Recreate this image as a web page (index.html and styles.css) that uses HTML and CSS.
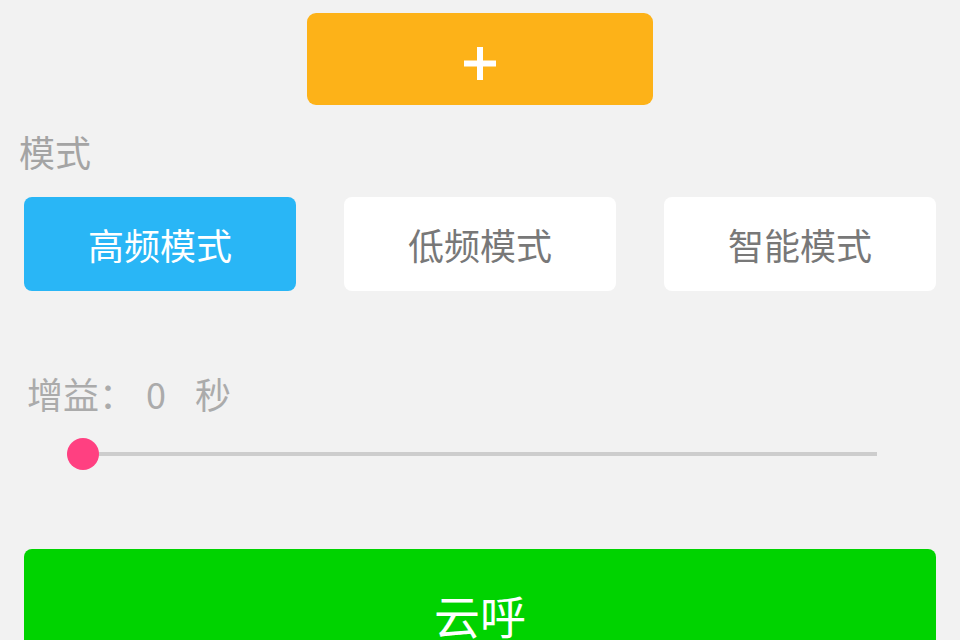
FILE: index.html
```html
<!DOCTYPE html>
<html lang="zh-CN">
<head>
    <meta charset="UTF-8">
    <meta name="viewport" content="width=device-width, initial-scale=1.0">
    <title>云呼</title>
    <link rel="stylesheet" href="styles.css">
</head>
<body>
    <div class="page">
        <button class="add-btn" aria-label="添加">
            <svg width="32" height="33" viewBox="0 0 32 33">
                <rect x="13" y="0" width="6" height="33" fill="#fff"/>
                <rect x="0" y="13.5" width="32" height="6" fill="#fff"/>
            </svg>
        </button>

        <div class="section-label">模式</div>
        <div class="modes">
            <button class="mode active">高频模式</button>
            <button class="mode">低频模式</button>
            <button class="mode">智能模式</button>
        </div>

        <div class="gain-label">增益：<span class="gain-value">0</span><span class="gain-unit">秒</span></div>
        <input type="range" class="gain-slider" min="0" max="60" value="0">

        <button class="call-btn">云呼</button>
    </div>
</body>
</html>
```

FILE: styles.css
```css
body {
    margin: 0;
    background: #f2f2f2;
    font-family: "Noto Sans CJK SC", "Noto Sans", sans-serif;
    overflow: hidden;
}
.page {
    height: 640px;
}
button {
    border: none;
    font-family: inherit;
    cursor: pointer;
}
.add-btn {
    display: flex;
    align-items: center;
    justify-content: center;
    width: 346px;
    height: 92px;
    margin: 13px auto 0;
    padding: 8px 0 0;
    background: #fdb218;
    border-radius: 9px;
}
.section-label {
    margin: 28px 0 0 19px;
    font-size: 36px;
    line-height: 36px;
    color: #a4a4a4;
}
.modes {
    display: flex;
    gap: 48px;
    margin: 28px 24px 0;
}
.mode {
    flex: 1;
    height: 94px;
    background: #fff;
    border-radius: 8px;
    font-size: 36px;
    color: #787878;
}
.mode.active {
    background: #29b6f6;
    color: #fff;
}
.gain-label {
    margin: 85px 0 0 27px;
    font-size: 36px;
    line-height: 34px;
    color: #ababab;
}
.gain-value {
    margin-left: 11px;
}
.gain-unit {
    margin-left: 29px;
}
.gain-slider {
    -webkit-appearance: none;
    appearance: none;
    display: block;
    width: 810px;
    height: 32px;
    margin: 28px 0 0 67px;
    padding: 0;
    background: transparent;
}
.gain-slider::-webkit-slider-runnable-track {
    height: 4px;
    background: #cdcdcd;
}
.gain-slider::-webkit-slider-thumb {
    -webkit-appearance: none;
    width: 32px;
    height: 32px;
    margin-top: -14px;
    border-radius: 50%;
    background: #ff4081;
}
.call-btn {
    display: block;
    width: 912px;
    height: 130px;
    margin: 79px 24px 0;
    background: #00d300;
    border-radius: 8px;
    font-size: 46px;
    color: #fff;
}
```
